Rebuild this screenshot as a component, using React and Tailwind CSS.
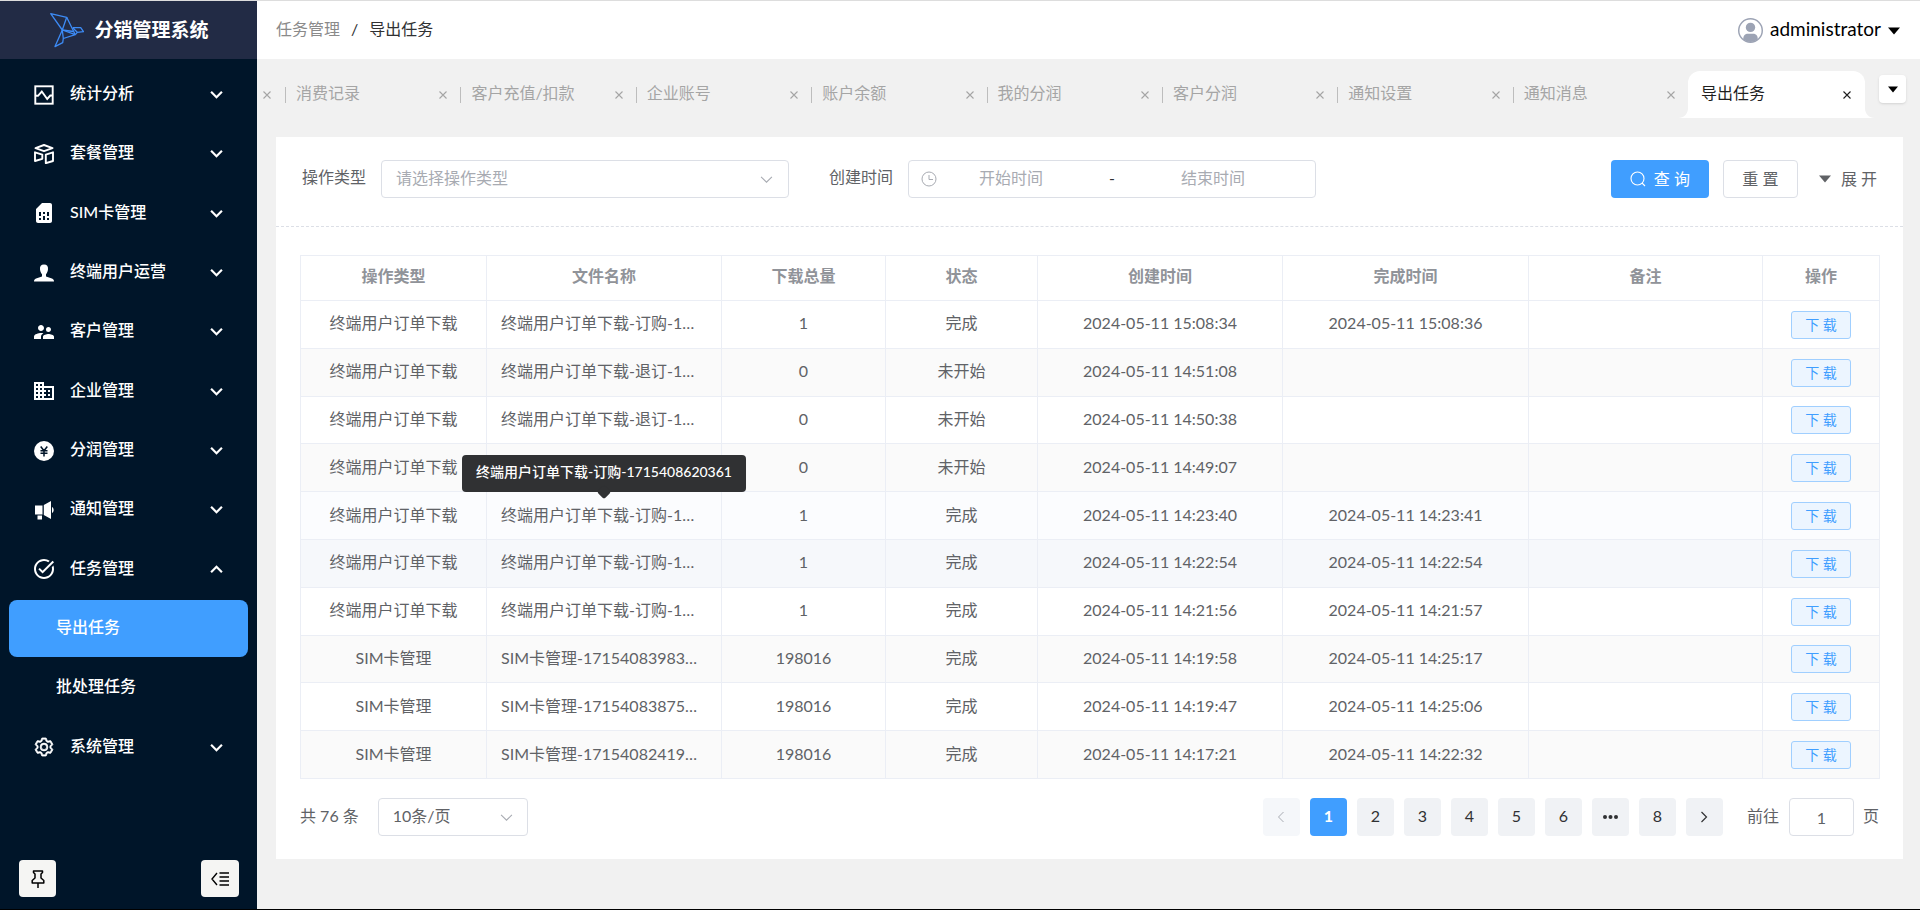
import React from 'react';
import {
  MdSimCard,
  MdSupervisorAccount,
  MdBusiness,
  MdTaskAlt,
} from 'react-icons/md';

function Caret({ className }) {
  return (
    <svg viewBox="0 0 12 8" className={className} fill="currentColor" aria-hidden="true">
      <path d="M0 0.5h12L6 7.5z" />
    </svg>
  );
}

function Chevron({ className, up = false, thick = 2 }) {
  return (
    <svg viewBox="0 0 12 12" className={className} fill="none" stroke="currentColor" strokeWidth={thick} aria-hidden="true">
      <path d={up ? 'M1 8.5L6 3.5L11 8.5' : 'M1 3.5L6 8.5L11 3.5'} />
    </svg>
  );
}

const icons = {
  chart: (
    <svg viewBox="0 0 20 20" className="size-5" fill="none" stroke="currentColor" strokeWidth="1.9" aria-hidden="true">
      <rect x="1.300" y="1.300" width="17.400" height="17.400" />
      <path d="M1.300 10.800H4L7.800 6.500l5.400 7.500L16.300 10.500H18.700" />
    </svg>
  ),
  boxes: (
    <svg viewBox="0 0 20 20" className="size-5" fill="none" stroke="currentColor" strokeWidth="1.9" strokeLinejoin="round" aria-hidden="true">
      <path d="M1.500 4.200L10 1l8.500 3.200L10 7.200z" />
      <path d="M1 8.300l7.300 2.300v4.200L1 17z" />
      <path d="M11.800 10.600L19 8.300V17l-7.200 2.200z" />
    </svg>
  ),
  sim: <MdSimCard className="size-6" />,
  user: (
    <svg viewBox="0 0 20 20" className="size-5" fill="currentColor" aria-hidden="true">
      <path d="M10 1.500c3 0 4.300 2 4 4.800-.2 2-.9 3.700-2 4.900v2.200l5.200 1.800c2 .7 2.800 1.300 2.800 3.300H0c0-2 .8-2.600 2.800-3.300L8 13.400v-2.200c-1.100-1.200-1.800-2.900-2-4.900C5.700 3.500 7 1.500 10 1.500z" />
    </svg>
  ),
  people: <MdSupervisorAccount className="size-6" />,
  company: <MdBusiness className="size-6" />,
  yen: (
    <svg viewBox="0 0 20 20" className="size-5" aria-hidden="true">
      <circle cx="10" cy="10" r="10" fill="currentColor" />
      <path d="M6.700 5.500L10 9.800l3.300-4.300M10 9.800v5.700M6.500 9.800h7M6.500 12.200h7" fill="none" stroke="#001529" strokeWidth="1.500" />
    </svg>
  ),
  horn: (
    <svg viewBox="0 0 20 20" className="size-5" fill="currentColor" aria-hidden="true">
      <path d="M1 5.500h7.500v9H1zM3.500 15.500h4.500v4H3.500zM9.800 5L17 1v18l-7.200-4zM18 7c2.200 1 2.200 5 0 6z" />
    </svg>
  ),
  task: <MdTaskAlt className="size-6" />,
  gear: (
    <svg viewBox="40 20 944 984" className="size-5" fill="currentColor" aria-hidden="true">
      <path d="M600.704 64a32 32 0 0 1 30.464 22.208l35.200 109.376c14.784 7.232 28.928 15.360 42.432 24.512l112.384-24.192a32 32 0 0 1 34.432 15.360L944.320 364.800a32 32 0 0 1-4.032 37.504l-77.120 85.120a357.120 357.120 0 0 1 0 49.024l77.120 85.248a32 32 0 0 1 4.032 37.504l-88.704 153.600a32 32 0 0 1-34.432 15.296L708.800 803.904c-13.440 9.088-27.648 17.280-42.368 24.512l-35.264 109.376A32 32 0 0 1 600.704 960H423.296a32 32 0 0 1-30.464-22.208L357.696 828.480a351.616 351.616 0 0 1-42.560-24.640l-112.320 24.256a32 32 0 0 1-34.432-15.360L79.680 659.200a32 32 0 0 1 4.032-37.504l77.120-85.248a357.120 357.120 0 0 1 0-48.896l-77.120-85.248A32 32 0 0 1 79.680 364.800l88.704-153.600a32 32 0 0 1 34.432-15.296l112.320 24.256c13.568-9.152 27.776-17.408 42.560-24.640l35.200-109.312A32 32 0 0 1 423.232 64H600.640zm-23.424 64H446.720l-36.352 113.088-24.512 11.968a294.113 294.113 0 0 0-34.816 20.096l-22.656 15.360-116.224-25.088-65.280 113.152 79.680 88.192-1.920 27.136a293.120 293.120 0 0 0 0 40.192l1.920 27.136-79.808 88.192 65.344 113.152 116.224-25.024 22.656 15.296a294.113 294.113 0 0 0 34.816 20.096l24.512 11.968L446.720 896h130.688l36.480-113.152 24.448-11.904a288.282 288.282 0 0 0 34.752-20.096l22.592-15.296 116.288 25.024 65.280-113.152-79.744-88.192 1.920-27.136a293.120 293.120 0 0 0 0-40.256l-1.920-27.136 79.808-88.128-65.344-113.152-116.288 24.960-22.592-15.232a287.616 287.616 0 0 0-34.752-20.096l-24.448-11.904L577.344 128zM512 320a192 192 0 1 1 0 384 192 192 0 0 1 0-384m0 64a128 128 0 1 0 0 256 128 128 0 0 0 0-256" stroke="currentColor" strokeWidth="34" />
    </svg>
  ),
};

const menus = [
  { icon: 'chart', label: '统计分析' },
  { icon: 'boxes', label: '套餐管理' },
  { icon: 'sim', label: 'SIM卡管理' },
  { icon: 'user', label: '终端用户运营' },
  { icon: 'people', label: '客户管理' },
  { icon: 'company', label: '企业管理' },
  { icon: 'yen', label: '分润管理' },
  { icon: 'horn', label: '通知管理' },
  { icon: 'task', label: '任务管理', children: ['导出任务', '批处理任务'] },
  { icon: 'gear', label: '系统管理' },
];

const tabs = ['消费记录', '客户充值/扣款', '企业账号', '账户余额', '我的分润', '客户分润', '通知设置', '通知消息'];

const columns = [
  ['操作类型', 'w-[186px]'],
  ['文件名称', 'w-[235px]'],
  ['下载总量', 'w-[164px]'],
  ['状态', 'w-[152px]'],
  ['创建时间', 'w-[245px]'],
  ['完成时间', 'w-[246px]'],
  ['备注', 'w-[234px]'],
  ['操作', 'w-[117px]'],
];

const T = '终端用户订单下载';
const S = 'SIM卡管理';
const rows = [
  [T, '终端用户订单下载-订购-1715411313561', '1', '完成', '2024-05-11 15:08:34', '2024-05-11 15:08:36', ''],
  [T, '终端用户订单下载-退订-1715410268204', '0', '未开始', '2024-05-11 14:51:08', '', ''],
  [T, '终端用户订单下载-退订-1715410238117', '0', '未开始', '2024-05-11 14:50:38', '', ''],
  [T, '终端用户订单下载-订购-1715410147326', '0', '未开始', '2024-05-11 14:49:07', '', ''],
  [T, '终端用户订单下载-订购-1715408620361', '1', '完成', '2024-05-11 14:23:40', '2024-05-11 14:23:41', ''],
  [T, '终端用户订单下载-订购-1715408574208', '1', '完成', '2024-05-11 14:22:54', '2024-05-11 14:22:54', ''],
  [T, '终端用户订单下载-订购-1715408516412', '1', '完成', '2024-05-11 14:21:56', '2024-05-11 14:21:57', ''],
  [S, 'SIM卡管理-1715408398317', '198016', '完成', '2024-05-11 14:19:58', '2024-05-11 14:25:17', ''],
  [S, 'SIM卡管理-1715408387524', '198016', '完成', '2024-05-11 14:19:47', '2024-05-11 14:25:06', ''],
  [S, 'SIM卡管理-1715408241906', '198016', '完成', '2024-05-11 14:17:21', '2024-05-11 14:22:32', ''],
];
const HOVERED = 4;

function rowColour(i) {
  if (i === HOVERED) return 'bg-[#fbfcfe]';
  if (i === HOVERED + 1) return 'bg-[#f6f8fb]';
  return i % 2 ? 'bg-[#fafafa]' : 'bg-white';
}

function Logo() {
  return (
    <svg viewBox="0 0 36 38" className="h-[38px] w-9" fill="none" stroke="#3d8bf5" strokeWidth="1.300" strokeLinejoin="round" aria-hidden="true">
      <path d="M2.700 2.700L18.700 6.300L14.300 19z" />
      <path d="M18.700 6.300L27.300 23.700L14.300 19L7 35.600L14.700 31.600L15.300 27.500L27.300 23.700" />
      <path d="M14.300 19L15.300 27.500M14.300 19L25.500 20.500" />
      <path d="M24.700 16.700H32.700L35.500 20.700L29.300 21.300L27.300 23.700M24.700 16.700L29.300 21.300" />
    </svg>
  );
}

function Sidebar() {
  return (
    <aside className="flex w-[257px] shrink-0 flex-col bg-[#001529] text-white">
      <div className="flex h-[58px] items-center justify-center gap-2.5">
        <div className="flex h-full w-full items-center justify-center gap-2.5 bg-[#222b45]">
          <Logo />
          <h1 className="text-[19px] font-bold leading-6">分销管理系统</h1>
        </div>
      </div>
      <nav className="mt-1.5 grid min-h-[712px] auto-rows-fr font-medium">
        {menus.map((m) => (
          <React.Fragment key={m.label}>
            <button type="button" aria-expanded={Boolean(m.children)} className="flex items-center gap-3.5 px-8 text-left">
              <span className="flex w-6 items-center justify-center">{icons[m.icon]}</span>
              <span className="flex-1 pb-[3px]">{m.label}</span>
              <Chevron className="mr-0.5 size-[13px]" up={Boolean(m.children)} />
            </button>
            {m.children?.map((c, i) => (
              <a key={c} href="#" className={i === 0 ? 'mx-[9px] my-px flex items-center rounded-lg bg-[#409eff] pb-[3px] pl-[47px]' : 'mx-[9px] my-px flex items-center rounded-lg pb-[3px] pl-[47px]'}>
                {c}
              </a>
            ))}
          </React.Fragment>
        ))}
      </nav>
      <div className="mt-auto flex justify-between pb-3 pl-[19px] pr-[18px]">
        <button type="button" aria-label="固定" className="flex h-[37px] w-[37px] items-center justify-center rounded bg-[#f5f5f3] text-black">
          <svg viewBox="0 0 14 18" className="h-[18px] w-3.5" fill="none" stroke="currentColor" strokeWidth="1.500" strokeLinejoin="round" aria-hidden="true">
            <path d="M2.500 1h9v1.500L10 4v4l2.800 2.500V13H1.200v-2.500L4 8V4L2.500 2.500zM7 13v5" />
          </svg>
        </button>
        <button type="button" aria-label="收起菜单" className="flex h-[37px] w-[38px] items-center justify-center rounded bg-[#f5f5f3] text-black">
          <svg viewBox="0 0 18 14" className="h-3.5 w-[18px]" fill="none" stroke="currentColor" strokeWidth="1.400" aria-hidden="true">
            <path d="M6 1L1 7l5 6M8.500 1h9.500M8.500 5h9.500M8.500 9h9.500M8.500 13h9.500" />
          </svg>
        </button>
      </div>
    </aside>
  );
}

function Header() {
  return (
    <header className="flex h-[58px] shrink-0 items-center justify-between bg-white pl-[19px] pr-5">
      <nav className="flex items-center pb-0.5 text-[#303133]">
        <a href="#" className="text-[#8a8a8a]">任务管理</a>
        <span className="mx-[11px]">/</span>
        <span>导出任务</span>
      </nav>
      <button type="button" className="flex items-center gap-[7px] text-[19px] leading-6 text-black">
        <svg viewBox="0 0 24 24" className="size-[25px]" aria-hidden="true">
          <circle cx="12" cy="12" r="11.300" fill="none" stroke="#9ca3b4" strokeWidth="1.400" />
          <circle cx="12" cy="9" r="4.500" fill="#9ca3b4" />
          <path d="M5 20.500c0-4 2-5.500 4.500-5.500h5c2.500 0 4.500 1.500 4.500 5.500-4 3.500-10 3.500-14 0z" fill="#9ca3b4" />
        </svg>
        <span className="pb-0.5">administrator</span>
        <Caret className="mt-0.5 h-2 w-3" />
      </button>
    </header>
  );
}

function CloseIcon() {
  return (
    <svg viewBox="0 0 8 8" className="size-2" fill="none" stroke="currentColor" strokeWidth="1.100" aria-hidden="true">
      <path d="M.5.5l7 7M7.500.5l-7 7" />
    </svg>
  );
}

function TabBar() {
  return (
    <div className="flex shrink-0 items-start pr-3.5 pt-3">
      <div className="flex min-w-0 flex-1 text-[#a5a5a5]">
        <button type="button" aria-label="关闭" className="flex h-[47px] w-7 items-center pl-1.5">
          <CloseIcon />
        </button>
        {tabs.map((t) => (
          <div key={t} className="flex h-[47px] flex-1 items-center">
            <span className="mr-2.5 h-4 w-px bg-[#bdbdbd]" />
            <a href="#" className="flex-1 whitespace-nowrap pb-[3px]">{t}</a>
            <button type="button" aria-label={`关闭${t}`} className="pr-[13px]">
              <CloseIcon />
            </button>
          </div>
        ))}
        <div className="relative mr-3.5 flex h-[47px] w-[177px] items-center rounded-t-xl bg-white pl-[13px] pr-3.5 text-[#1f1f1f]">
          <svg viewBox="0 0 10 10" className="absolute -left-2.5 bottom-0 size-2.5" fill="#fff" aria-hidden="true">
            <path d="M10 0v10H0c6 0 10-4 10-10z" />
          </svg>
          <svg viewBox="0 0 10 10" className="absolute -right-2.5 bottom-0 size-2.5" fill="#fff" aria-hidden="true">
            <path d="M0 0v10h10C4 10 0 6 0 0z" />
          </svg>
          <a href="#" className="flex-1 pb-[3px]">导出任务</a>
          <button type="button" aria-label="关闭导出任务"><CloseIcon /></button>
        </div>
      </div>
      <button type="button" aria-label="更多标签" className="mt-1 flex h-7 w-[27px] items-center justify-center rounded bg-white text-black shadow-sm">
        <Caret className="h-[7px] w-2.5" />
      </button>
    </div>
  );
}

function Filters() {
  return (
    <form className="flex items-start border-b border-dashed border-[#dcdfe6] px-[26px] pb-7 pt-[23px]" onSubmit={(e) => e.preventDefault()}>
      <label htmlFor="type" className="pr-[15px] leading-[34px]">操作类型</label>
      <div className="relative w-[408px]">
        <select id="type" defaultValue="" className="h-[38px] w-full appearance-none rounded border border-[#dcdfe6] bg-white pb-0.5 pl-3.5 text-[#a8abb2]">
          <option value="">请选择操作类型</option>
        </select>
        <Chevron className="pointer-events-none absolute right-4 top-[13px] size-[13px] text-[#a8abb2]" thick={1} />
      </div>
      <label htmlFor="start" className="pl-10 pr-[15px] leading-[34px]">创建时间</label>
      <div className="flex h-[38px] w-[408px] items-center rounded border border-[#dcdfe6] pl-3 pr-7">
        <svg viewBox="0 0 16 16" className="size-4 shrink-0 text-[#a8abb2]" fill="none" stroke="currentColor" aria-hidden="true">
          <circle cx="8" cy="8" r="7" />
          <path d="M8 4v4.500h4" />
        </svg>
        <input id="start" placeholder="开始时间" className="min-w-0 flex-1 pb-0.5 text-center placeholder:text-[#a8abb2]" />
        <span className="w-[54px] pb-0.5 text-center text-[#303133]">-</span>
        <input aria-label="结束时间" placeholder="结束时间" className="min-w-0 flex-1 pb-0.5 text-center placeholder:text-[#a8abb2]" />
      </div>
      <div className="ml-auto flex items-center">
        <button type="submit" className="flex h-[38px] w-[98px] items-center justify-center gap-2 rounded bg-[#409eff] text-white">
          <svg viewBox="0 0 16 16" className="size-4" fill="none" stroke="currentColor" strokeWidth="1.100" aria-hidden="true">
            <circle cx="7.500" cy="7.500" r="6.500" />
            <path d="M12 12l3 3" />
          </svg>
          查 询
        </button>
        <button type="reset" className="ml-3.5 h-[38px] w-[75px] rounded border border-[#dcdfe6]">重 置</button>
        <button type="button" className="ml-[21px] flex items-center gap-2.5">
          <Caret className="h-2 w-3" />
          展 开
        </button>
      </div>
    </form>
  );
}

function TaskTable() {
  return (
    <table className="h-[524px] w-full table-fixed border-collapse text-center">
      <thead>
        <tr className="h-[45px] text-[#909399]">
          {columns.map(([name, width]) => (
            <th key={name} className={`border border-[#ebeef5] pb-1 font-bold ${width}`}>{name}</th>
          ))}
        </tr>
      </thead>
      <tbody>
        {rows.map((row, i) => (
          <tr key={row[4]} className={rowColour(i)}>
            {row.map((cell, j) => (
              <td key={j} className={`relative border border-[#ebeef5] pb-0.5 leading-6 ${j === 1 ? 'pl-3.5 pr-5' : 'px-3.5'}`}>
                <div className="truncate">{cell}</div>
                {i === HOVERED && j === 1 && (
                  <div role="tooltip" className="absolute bottom-[47px] left-1/2 z-10 -translate-x-1/2 whitespace-nowrap rounded bg-[#303133] px-3.5 pb-2.5 pt-1.5 text-sm font-medium leading-[21px] text-white">
                    {cell}
                    <span className="absolute -bottom-[5px] left-1/2 size-2.5 -translate-x-1/2 rotate-45 rounded-[2px] bg-[#303133]" />
                  </div>
                )}
              </td>
            ))}
            <td className="border border-[#ebeef5] pt-px">
              <button type="button" className="h-7 w-[60px] rounded-[3px] border border-[#a0cfff] bg-[#ecf5ff] align-middle text-sm text-[#409eff]">下 载</button>
            </td>
          </tr>
        ))}
      </tbody>
    </table>
  );
}

const pageButton = 'flex h-[38px] w-[37px] items-center justify-center rounded-sm bg-[#f0f2f5] text-[#303133]';

function Pager() {
  return (
    <div className="mt-[19px] flex items-center">
      <span className="mr-[19px] pb-0.5">共 76 条</span>
      <div className="relative w-[150px]">
        <select aria-label="每页条数" className="h-[38px] w-full appearance-none rounded border border-[#dcdfe6] bg-white pb-0.5 pl-3.5">
          <option>10条/页</option>
        </select>
        <Chevron className="pointer-events-none absolute right-[15px] top-[13px] size-[13px] text-[#a8abb2]" thick={1} />
      </div>
      <div className="ml-auto flex items-center gap-2.5">
        <button type="button" disabled aria-label="上一页" className="flex h-[38px] w-[37px] items-center justify-center rounded-sm bg-[#f5f7fa] text-[#a8abb2]">
          <Chevron className="size-3 rotate-90" thick={1} />
        </button>
        <button type="button" className="flex h-[38px] w-[37px] items-center justify-center rounded-sm bg-[#409eff] pb-[3px] font-bold text-white">1</button>
        {['2', '3', '4', '5', '6'].map((n) => (
          <button type="button" key={n} className={`${pageButton} pb-[3px]`}>{n}</button>
        ))}
        <button type="button" aria-label="更多页" className={pageButton}>
          <svg viewBox="0 0 15 4" className="h-1 w-[15px]" fill="currentColor" aria-hidden="true">
            <circle cx="2" cy="2" r="2" />
            <circle cx="7.500" cy="2" r="2" />
            <circle cx="13" cy="2" r="2" />
          </svg>
        </button>
        <button type="button" className={`${pageButton} pb-[3px]`}>8</button>
        <button type="button" aria-label="下一页" className={pageButton}>
          <Chevron className="size-3 -rotate-90" thick={1.2} />
        </button>
      </div>
      <label htmlFor="page" className="ml-6 pb-0.5">前往</label>
      <input id="page" defaultValue="1" className="ml-2.5 mr-[9px] h-[38px] w-[65px] rounded border border-[#dcdfe6] text-center" />
      <span className="pb-0.5">页</span>
    </div>
  );
}

export default function App() {
  return (
    <div className="flex min-h-screen border-b border-t border-b-black border-t-[#dddddd] font-['Lato','Noto_Sans_CJK_SC',sans-serif] text-base text-[#606266]">
      <Sidebar />
      <div className="flex min-w-0 flex-1 flex-col bg-[#f1f1f1]">
        <Header />
        <TabBar />
        <main className="mb-[50px] ml-[19px] mr-[17px] mt-[19px] bg-white">
          <Filters />
          <section className="px-6 pb-[23px] pt-7">
            <TaskTable />
            <Pager />
          </section>
        </main>
      </div>
    </div>
  );
}
